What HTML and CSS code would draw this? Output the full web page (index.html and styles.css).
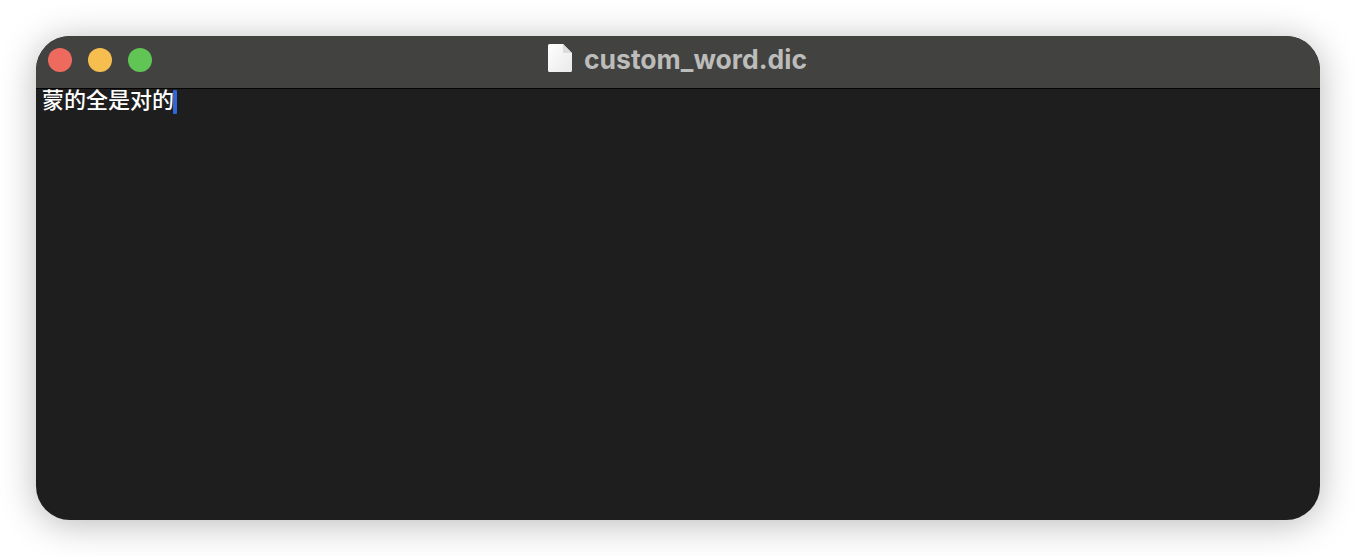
FILE: index.html
```html
<!DOCTYPE html>
<html lang="en">
<head>
  <meta charset="UTF-8">
  <title>custom_word.dic</title>
  <link rel="stylesheet" href="styles.css">
</head>
<body>
  <div class="window">
    <div class="titlebar">
      <div class="lights">
        <span class="light red"></span>
        <span class="light yellow"></span>
        <span class="light green"></span>
      </div>
      <div class="title">
        <svg class="file-icon" width="24" height="28" viewBox="0 0 24 28">
          <defs>
            <linearGradient id="paper" x1="0" y1="0" x2="1" y2="1">
              <stop offset="0" stop-color="#ffffff"/>
              <stop offset="1" stop-color="#e9e9e9"/>
            </linearGradient>
          </defs>
          <path d="M1.5 0H15L24 9V26.5A1.5 1.5 0 0 1 22.5 28H1.5A1.5 1.5 0 0 1 0 26.5V1.5A1.5 1.5 0 0 1 1.5 0Z" fill="url(#paper)"/>
          <path d="M15 0L24 9H16.5A1.5 1.5 0 0 1 15 7.5Z" fill="#dcdcdc"/>
        </svg>
        <span class="filename">custom_word.dic</span>
      </div>
    </div>
    <div class="editor">
      <span class="line">蒙的全是对的</span><span class="caret"></span>
    </div>
  </div>
</body>
</html>
```

FILE: styles.css
```css
* {
  margin: 0;
  padding: 0;
  box-sizing: border-box;
}

html, body {
  height: 100%;
}

body {
  background: #fff;
  padding: 36px;
  overflow: hidden;
  font-family: "Inter", "Liberation Sans", sans-serif;
}

.window {
  height: 484px;
  background: #1e1e1e;
  border-radius: 34px;
  overflow: hidden;
  box-shadow: 0 4px 36px rgba(0, 0, 0, 0.28);
  display: flex;
  flex-direction: column;
}

.titlebar {
  position: relative;
  height: 53px;
  flex-shrink: 0;
  padding-bottom: 8px;
  background: #424240;
  border-bottom: 1px solid #050505;
  display: flex;
  align-items: center;
  justify-content: center;
}

.lights {
  position: absolute;
  left: 12px;
  top: 12px;
  display: flex;
  gap: 16px;
}

.light {
  width: 24px;
  height: 24px;
  border-radius: 50%;
}

.red {
  background: #ee6a5f;
}

.yellow {
  background: #f5be4f;
}

.green {
  background: #61c555;
}

.title {
  display: flex;
  align-items: center;
  gap: 12px;
  margin-left: -1px;
}

.file-icon {
  display: block;
}

.filename {
  margin-top: 2px;
  color: #bcbcba;
  font-size: 26.5px;
  font-weight: 700;
  line-height: 28px;
}

.editor {
  flex: 1;
  padding-left: 6px;
  display: flex;
  align-items: flex-start;
  color: #fff;
  font-family: "Noto Sans CJK SC", sans-serif;
  font-size: 22px;
  font-weight: 500;
  line-height: 24px;
}

.line {
  margin-top: -3px;
}

.caret {
  width: 4px;
  height: 24px;
  margin: 1px 0 0 -1px;
  background: #2e66dd;
  border-radius: 1px;
}
```
